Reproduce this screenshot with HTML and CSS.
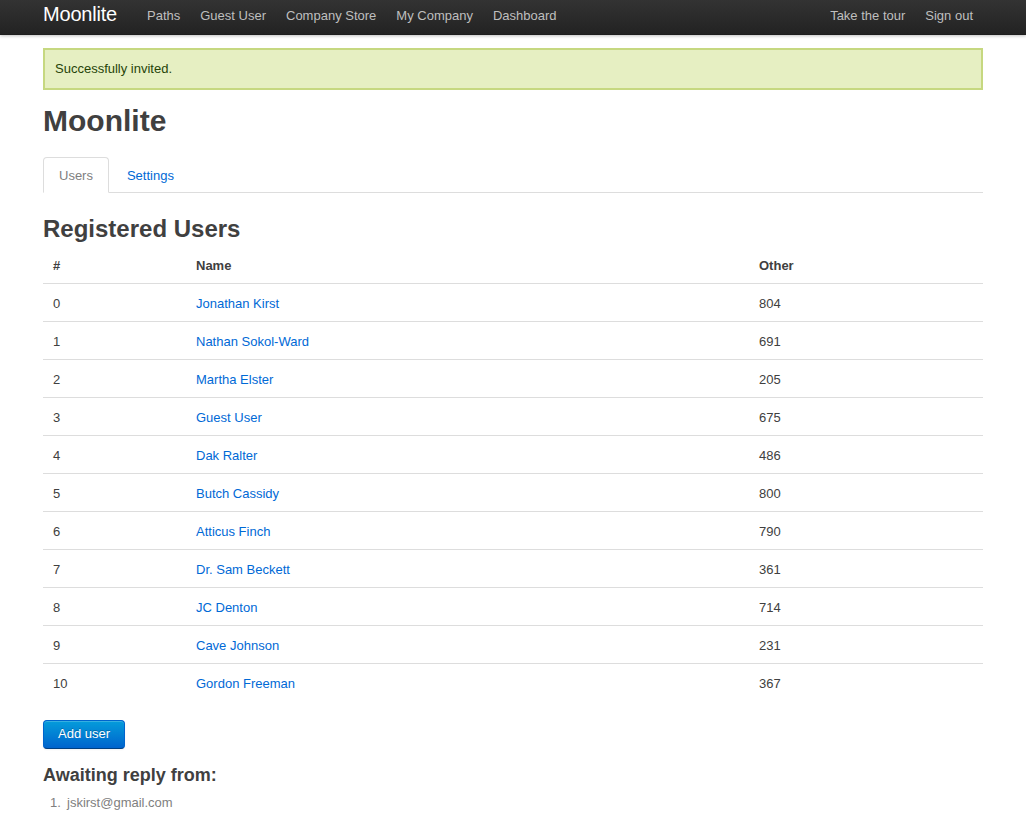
FILE: index.html
```html
<!DOCTYPE html>
<html>
<head>
<meta charset="utf-8">
<title>Moonlite</title>
<link rel="stylesheet" href="styles.css">
</head>
<body>
<div class="topbar">
  <div class="container topbar-inner">
    <a class="brand" href="#">Moonlite</a>
    <ul class="nav">
      <li><a href="#">Paths</a></li>
      <li><a href="#">Guest User</a></li>
      <li><a href="#">Company Store</a></li>
      <li><a href="#">My Company</a></li>
      <li><a href="#">Dashboard</a></li>
    </ul>
    <ul class="nav nav-right">
      <li><a href="#">Take the tour</a></li>
      <li><a href="#">Sign out</a></li>
    </ul>
  </div>
</div>

<div class="container content">
  <div class="success">Successfully invited.</div>

  <h1>Moonlite</h1>

  <ul class="tabs">
    <li class="active"><a href="#">Users</a></li>
    <li><a href="#">Settings</a></li>
  </ul>

  <h2>Registered Users</h2>
  <table class="users">
    <colgroup>
      <col class="c-num">
      <col class="c-name">
      <col class="c-other">
    </colgroup>
    <thead>
      <tr><th>#</th><th>Name</th><th>Other</th></tr>
    </thead>
    <tbody>
      <tr><td>0</td><td><a href="#">Jonathan Kirst</a></td><td>804</td></tr>
      <tr><td>1</td><td><a href="#">Nathan Sokol-Ward</a></td><td>691</td></tr>
      <tr><td>2</td><td><a href="#">Martha Elster</a></td><td>205</td></tr>
      <tr><td>3</td><td><a href="#">Guest User</a></td><td>675</td></tr>
      <tr><td>4</td><td><a href="#">Dak Ralter</a></td><td>486</td></tr>
      <tr><td>5</td><td><a href="#">Butch Cassidy</a></td><td>800</td></tr>
      <tr><td>6</td><td><a href="#">Atticus Finch</a></td><td>790</td></tr>
      <tr><td>7</td><td><a href="#">Dr. Sam Beckett</a></td><td>361</td></tr>
      <tr><td>8</td><td><a href="#">JC Denton</a></td><td>714</td></tr>
      <tr><td>9</td><td><a href="#">Cave Johnson</a></td><td>231</td></tr>
      <tr><td>10</td><td><a href="#">Gordon Freeman</a></td><td>367</td></tr>
    </tbody>
  </table>

  <div class="actions">
    <button class="btn primary" type="button">Add user</button>
  </div>

  <h3>Awaiting reply from:</h3>
  <ol class="pending">
    <li>jskirst@gmail.com</li>
  </ol>
</div>
</body>
</html>
```

FILE: styles.css
```css
* { box-sizing: border-box; }

html, body {
  margin: 0;
  padding: 0;
}

body {
  font-family: "Liberation Sans", Arial, Helvetica, sans-serif;
  font-size: 13px;
  line-height: 18px;
  color: #404040;
  background: #fff;
}

a {
  color: #0069d6;
  text-decoration: none;
}

.container {
  width: 940px;
  margin: 0 auto;
}

/* Top bar */
.topbar {
  height: 35px;
  background-color: #222;
  background-image: linear-gradient(to bottom, #333333, #222222);
  box-shadow: 0 1px 3px rgba(0, 0, 0, 0.25), inset 0 -1px 0 rgba(0, 0, 0, 0.1);
}

.topbar-inner {
  display: flex;
  align-items: flex-start;
  height: 35px;
}

.brand {
  color: #fff;
  font-size: 20px;
  line-height: 29px;
  padding-right: 20px;
  display: block;
  letter-spacing: -0.2px;
}

.nav {
  display: flex;
  list-style: none;
  margin: 0;
  padding: 0;
}

.nav li a {
  display: block;
  color: #bfbfbf;
  font-size: 13px;
  line-height: 31px;
  padding: 0 10px;
}

.nav-right {
  margin-left: auto;
}

/* Content */
.content {
  padding-top: 13px;
}

.success {
  padding: 10px;
  margin-bottom: 13px;
  border: 2px solid #c6d880;
  background: #e6efc2;
  color: #264409;
  line-height: 18px;
}

h1, h2, h3 {
  font-weight: bold;
  color: #404040;
  margin: 0;
}

h1 {
  font-size: 30px;
  line-height: 36px;
  margin-bottom: 18px;
}

h2 {
  font-size: 24px;
  line-height: 36px;
}

h3 {
  font-size: 18px;
  line-height: 27px;
}

/* Tabs */
.tabs {
  display: flex;
  list-style: none;
  margin: 0 0 18px;
  padding: 0;
  border-bottom: 1px solid #ddd;
}

.tabs li {
  margin-bottom: -1px;
}

.tabs li a {
  display: block;
  padding: 1px 15px 0;
  margin-right: 2px;
  line-height: 33px;
  border: 1px solid transparent;
  border-radius: 4px 4px 0 0;
}

.tabs li.active a {
  color: #808080;
  background: #fff;
  border-color: #ddd #ddd transparent;
}

/* Table */
.users {
  width: 100%;
  border-collapse: collapse;
  border-spacing: 0;
  margin-bottom: 19px;
  font-size: 13px;
}

.c-num { width: 143px; }
.c-name { width: 563px; }

.users th,
.users td {
  padding: 11px 10px 8px;
  line-height: 18px;
  text-align: left;
  vertical-align: middle;
}

.users th {
  padding: 10px 10px 8px;
  font-weight: bold;
}

.users td {
  border-top: 1px solid #ddd;
}

/* Button */
.actions {
  margin-bottom: 13px;
}

.btn {
  display: inline-block;
  font-family: "Liberation Sans", Arial, Helvetica, sans-serif;
  font-size: 13px;
  line-height: 16px;
  padding: 5px 14px 6px;
  border: 1px solid;
  border-radius: 4px;
  cursor: pointer;
}

.btn.primary {
  color: #fff;
  background-color: #0064cd;
  background-image: linear-gradient(to bottom, #049cdb, #0064cd);
  border-color: #0064cd #0064cd #003f81;
  text-shadow: 0 -1px 0 rgba(0, 0, 0, 0.25);
  box-shadow: inset 0 1px 0 rgba(255, 255, 255, 0.2), 0 1px 2px rgba(0, 0, 0, 0.05);
}

/* Pending list */
.pending {
  list-style: none;
  margin: 5px 0 18px 0;
  padding: 0 0 0 24px;
}

.pending li {
  line-height: 18px;
  color: #808080;
}

.pending li::before {
  content: counter(list-item) ".";
  display: inline-block;
  width: 17px;
  margin-left: -17px;
}
```
